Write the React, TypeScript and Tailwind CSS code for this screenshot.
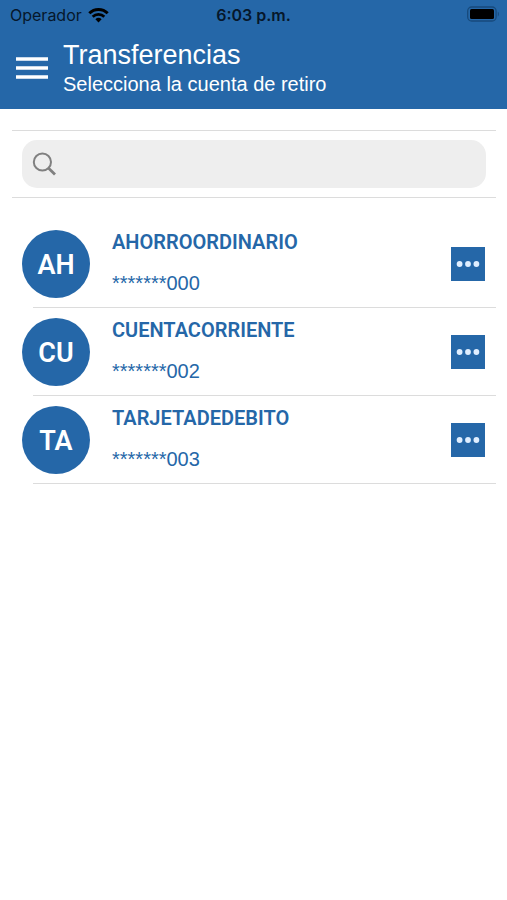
import { useState } from "react";

type Account = {
  initials: string;
  name: string;
  number: string;
};

const accounts: Account[] = [
  { initials: "AH", name: "AHORROORDINARIO", number: "*******000" },
  { initials: "CU", name: "CUENTACORRIENTE", number: "*******002" },
  { initials: "TA", name: "TARJETADEDEBITO", number: "*******003" },
];

const StatusBar = () => {
  return (
    <div className="grid grid-cols-3 items-center h-[30px] px-[10px] text-[16px] leading-[20px] text-[#06172b] font-['Inter',sans-serif]">
      <div className="flex items-center gap-[6px]">
        <span>Operador</span>
        <svg width="21" height="15" viewBox="0 0 21 15" fill="none">
          <path d="M1.3 5.3a13 13 0 0 1 18.4 0" stroke="#000" strokeWidth="2.9" />
          <path d="M4.7 8.8a8.2 8.2 0 0 1 11.6 0" stroke="#000" strokeWidth="2.7" />
          <path d="M10.5 14.4 7.4 11.3a4.5 4.5 0 0 1 6.2 0Z" fill="#000" />
        </svg>
      </div>
      <span className="text-center font-semibold whitespace-nowrap">6:03 p.m.</span>
      <svg className="justify-self-end" width="30" height="16" viewBox="0 0 30 16" overflow="visible">
        <rect x="0.7" y="0" width="28.4" height="14" rx="4" fill="none" stroke="#174a7c" strokeWidth="1.3" />
        <rect x="3" y="2" width="24" height="10" rx="1.5" fill="#000" />
        <path d="M30.8 4.7c1.4.5 1.4 4.2 0 4.7Z" fill="#174a7c" />
      </svg>
    </div>
  );
};

const Header = () => {
  return (
    <header className="bg-[#2567a8] pb-3">
      <StatusBar />
      <div className="flex items-start gap-[15px] pl-4 pt-[9px] text-white">
        <button type="button" aria-label="Menú" className="mt-[17px]">
          <svg width="32" height="24" viewBox="0 0 32 24">
            <path d="M0 3h32M0 12h32M0 21h32" stroke="#fff" strokeWidth="3.6" />
          </svg>
        </button>
        <div>
          <h1 className="text-[27px] leading-[32px]">Transferencias</h1>
          <p className="text-[20px] leading-[26px]">Selecciona la cuenta de retiro</p>
        </div>
      </div>
    </header>
  );
};

const AccountRow = ({ account }: { account: Account }) => {
  return (
    <li className="pl-[10px]">
      <div className="flex items-center h-[87px] pr-[11px]">
        <div className="flex items-center justify-center shrink-0 size-[68px] rounded-full bg-[#2567a8] text-white text-[27px] font-semibold font-['Roboto',sans-serif]">
          <span className="pt-1">{account.initials}</span>
        </div>
        <div className="flex-1 pl-[22px] pb-[3px] text-[20px] text-[#2567a8]">
          <p className="leading-[24px] font-semibold font-['Roboto',sans-serif]">{account.name}</p>
          <p className="pt-[17px] leading-[24px]">{account.number}</p>
        </div>
        <button
          type="button"
          aria-label={account.name}
          className="flex items-center justify-center size-[34px] bg-[#2567a8]"
        >
          <svg width="24" height="8" viewBox="0 0 24 8" fill="#dfeeff">
            <circle cx="3.6" cy="4" r="2.9" />
            <circle cx="12" cy="4" r="2.9" />
            <circle cx="20.4" cy="4" r="2.9" />
          </svg>
        </button>
      </div>
      <div className="ml-[11px] h-px bg-[#dcdcdc]" />
    </li>
  );
};

export default function App() {
  const [search, setSearch] = useState("");
  const visible = accounts.filter((el) =>
    el.name.toLowerCase().includes(search.toLowerCase())
  );

  return (
    <div className="min-h-screen bg-white font-['Liberation_Sans',Arial,sans-serif]">
      <Header />
      <main className="pl-3 pr-[11px] pt-[21px]">
        <div className="border-y border-[#dcdcdc] px-[10px] py-[9px]">
          <label className="flex items-center gap-3 h-[48px] px-[10px] rounded-[15px] bg-[#eeeeee]">
            <svg width="24" height="24" viewBox="0 0 24 24" fill="none" stroke="#808080">
              <circle cx="10.4" cy="10" r="8.6" strokeWidth="2" />
              <path d="M16.4 16l6.6 6.4" strokeWidth="2.8" />
            </svg>
            <input
              type="text"
              aria-label="Buscar"
              className="flex-1 min-w-0 bg-transparent text-[20px] outline-none"
              value={search}
              onChange={(e) => setSearch(e.target.value)}
            />
          </label>
        </div>
        <ul className="pt-[22px]">
          {visible.map((el) => (
            <AccountRow key={el.name} account={el} />
          ))}
        </ul>
      </main>
    </div>
  );
}
